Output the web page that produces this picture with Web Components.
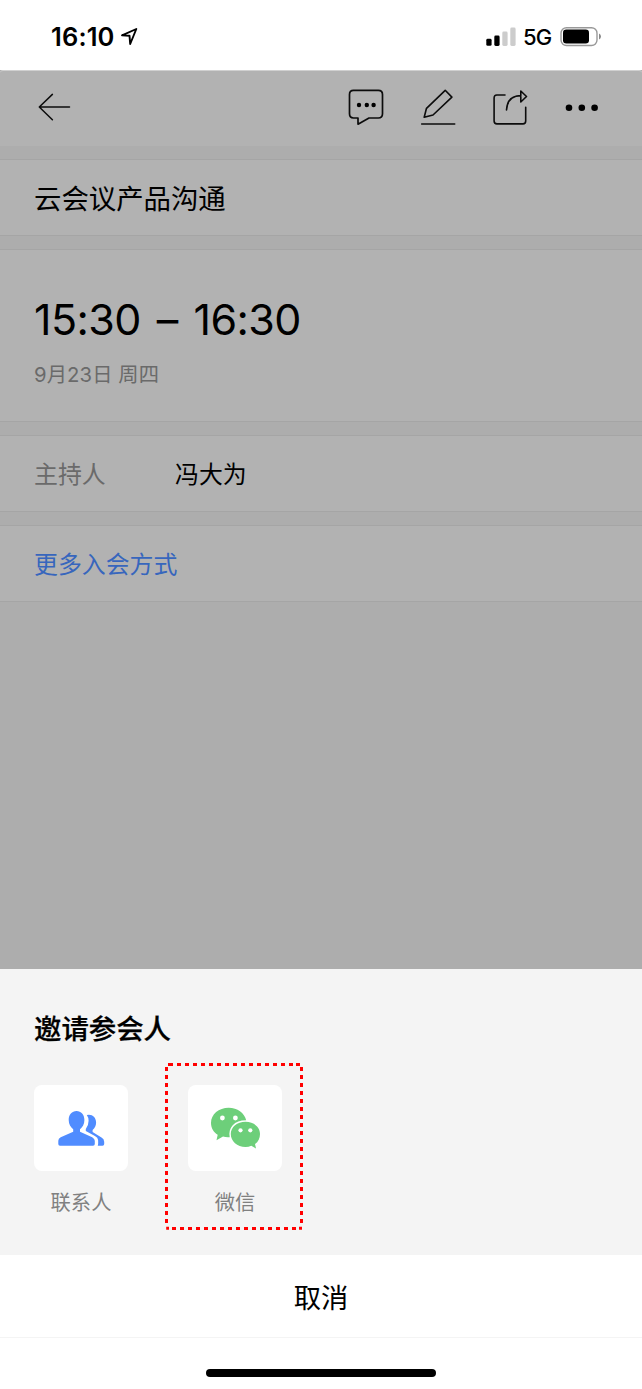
<!DOCTYPE html>
<html lang="zh-CN">
<head>
<meta charset="utf-8">
<title>邀请参会人</title>
<style>
html,body{margin:0;padding:0;background:#fff}
body{width:642px;height:1389px;overflow:hidden;font-family:Inter,"Noto Sans CJK SC",sans-serif;color:#000}
</style>
</head>
<body>
<meeting-screen></meeting-screen>
<script>
const define = (name, html) => {
  const t = document.createElement('template');
  t.innerHTML = html;
  customElements.define(name, class extends HTMLElement {
    constructor() {
      super();
      this.attachShadow({mode: 'open'}).append(t.content.cloneNode(true));
    }
  });
};

define('status-bar', `
<style>
:host{display:flex;height:70px;box-sizing:border-box;padding:3px 40px 0 51px;align-items:center;background:#fff}
.time{font-weight:600;font-size:25.5px;line-height:30px;letter-spacing:.15px;white-space:nowrap;width:69px}
.net{font-size:22px;line-height:30px;font-weight:450;margin-left:7px;width:29px;letter-spacing:-.8px;white-space:nowrap}
.signal{margin-left:auto}
.battery{margin-left:8px}
svg{display:block;flex:none}
</style>
<span class="time">16:10</span>
<svg width="19" height="20" viewBox="0 0 19 20"><path d="M2 8.3 16.3 2 10.2 17 9.5 8.7Z" fill="none" stroke="#000" stroke-width="1.9" stroke-linejoin="round"/></svg>
<svg class="signal" width="30" height="20" viewBox="0 0 30 20"><g><rect x=".3" y="11.8" width="5.3" height="7" rx="1.4"/><rect x="8.3" y="8.6" width="5.3" height="10.3" rx="1.4"/><rect x="16.3" y="4.6" width="5.3" height="14.3" rx="1.4" fill="#ccc"/><rect x="24.3" y=".6" width="5.3" height="18.3" rx="1.4" fill="#ccc"/></g></svg>
<span class="net">5G</span>
<svg class="battery" width="42" height="20" viewBox="0 0 42 20"><rect x="1" y=".7" width="36" height="17.8" rx="5.5" fill="none" stroke="#999" stroke-width="1.4"/><rect x="3" y="2.6" width="26" height="14" rx="3.3"/><path d="M39 6.4q2 1 2 3t-2 3z" fill="#888"/></svg>
`);

define('nav-bar', `
<style>
:host{display:flex;height:76px;box-sizing:border-box;padding:0 42px 3px 38px;border-top:1px solid #d0d0d0;background:#b2b2b2;border-radius:3px 3px 0 0;align-items:center}
svg{display:block;flex:none;fill:none;stroke:#0c0c0c;stroke-width:1.7;stroke-linecap:round;stroke-linejoin:round}
.chat{margin-left:auto}
.dots{fill:#000;stroke:none}
svg+svg:not(.chat){margin-left:36px}
</style>
<svg width="34" height="36" viewBox="0 0 34 36"><path d="M31.5 18H1.3M14.4 5.4 1.3 18 14.4 30.8" stroke-width="1.5"/></svg>
<svg class="chat" width="36" height="38" viewBox="0 0 36 38"><path d="M5.5 2.4H30.3Q34.5 2.4 34.5 6.6V25.8Q34.5 30 30.3 30H21L10 36.2V30H5.5Q1.5 30 1.5 25.8V6.6Q1.5 2.4 5.5 2.4Z"/><g class="dots"><circle cx="11" cy="17" r="2.2"/><circle cx="18.8" cy="17" r="2.2"/><circle cx="25.6" cy="17" r="2.2"/></g></svg>
<svg width="36" height="38" viewBox="0 0 36 38"><path d="M25.2 2.3 31.9 9.1 13 27 4.2 29.3 6.5 20.3ZM1.7 36H34.7" stroke-width="1.6"/></svg>
<svg width="36" height="38" viewBox="0 0 36 38"><path d="M13 7H4.8Q2.1 7 2.1 10V33Q2.1 35.9 5 35.9H31Q33.7 35.9 33.7 33V19.3M14.5 22C15 13 20 7.7 28.8 7.6V3L34.5 8.5 28.8 14V8.5" stroke-width="1.6"/></svg>
<svg width="36" height="38" viewBox="0 0 36 38"><g class="dots"><circle cx="5" cy="19.7" r="3.3"/><circle cx="17.8" cy="19.7" r="3.3"/><circle cx="30.6" cy="19.7" r="3.3"/></g></svg>
`);

define('info-cell', `
<style>
:host{display:flex;align-items:center;height:77px;box-sizing:border-box;margin-top:13px;padding:2px 34px 0;border:solid #a5a5a5;border-width:1px 0;background:#b2b2b2;white-space:nowrap}
</style><slot></slot>`);

define('meeting-time', `
<style>
:host{display:block;align-self:flex-start}
.range{font-size:43px;line-height:52px;letter-spacing:-.6px;word-spacing:4.5px;margin-top:41px}
.date{font-size:20.3px;line-height:30px;color:#6a6a6a;margin-top:15px;letter-spacing:.1px}
</style>
<div class="range"><slot name="range"></slot></div>
<div class="date"><slot name="date"></slot></div>`);

define('invite-option', `
<style>
:host{display:flex;flex-direction:column;align-items:center;width:94px}
.tile{width:94px;height:86px;border-radius:8px;background:#fff;display:flex;align-items:center;justify-content:center}
.label{font-size:20.3px;line-height:30px;color:#808080;margin-top:17px;white-space:nowrap}
</style>
<div class="tile"><slot name="icon"></slot></div>
<div class="label"><slot></slot></div>`);

define('contacts-icon', `
<style>:host{display:block}svg{display:block}</style>
<svg width="50" height="40" viewBox="0 -.7 50 40" fill="#508cff"><path d="M20.5 2.4C25.1 2.4 28.4 6.2 28.4 11.2C28.4 15.3 26.5 18.6 24 20.5V23L36.2 28.5Q38.8 30 38.8 32V35.3Q38.8 37.1 37 37.1H4Q2.3 37.1 2.3 35.3V32Q2.3 29.7 4.7 28.6L17.2 23V20.5C14.7 18.6 12.7 15.3 12.7 11.2C12.7 6.2 16 2.4 20.5 2.4Z"/><path d="M30.8 6.3Q33.2 5.5 35.8 6.5C38.5 7.7 40.1 10.5 40.1 13.8C40.1 17 38.8 19.6 36.6 21.2V23.3L45.5 28.9Q48.2 30.5 48.2 33V35.4Q48.2 37.1 46.5 37.1H41.7Q42.4 36 42.1 31.4Q42 29 38.9 27.3L29.8 22.2V20.3Q32.6 16.5 32.6 12Q32.6 8.8 30.8 6.3Z"/></svg>`);

define('wechat-icon', `
<style>:host{display:block}svg{display:block}</style>
<svg width="50" height="42" viewBox="-.5 .2 50 42"><path fill="#6dcf7a" d="M18.2 1C8.3 1 .5 7.5.5 16.2C.5 21.2 3 25.2 7.2 28L6 33.5 12.5 29.8Q15.4 30.8 19.2 30.5C17.5 21 23.5 13.5 35.7 13.5C33.8 6 27 1 18.2 1Z"/><path fill="#6dcf7a" d="M35 15C26.7 15 20.3 20.2 20.3 27.3C20.3 34.6 26.7 40.2 35 40.2Q38.3 40.2 40.8 39L45.5 41.8 44.5 37.2C47.8 35.2 49.5 31.7 49.5 27.3C49.5 20.2 43.3 15 35 15Z"/><g fill="#fff"><circle cx="11.9" cy="11.2" r="2.4"/><circle cx="24.9" cy="11.2" r="2.4"/><circle cx="30" cy="23.5" r="2.1"/><circle cx="39.8" cy="23.5" r="2.1"/></g></svg>`);

define('dotted-frame', `
<style>:host{display:block;position:absolute;left:-23px;top:-22px;width:138px;height:167px}svg{display:block}</style>
<svg width="138" height="167" fill="none" stroke="#f00" stroke-width="3"><path d="M12 1.5H132M7 165.5H132M1.5 12V162M136.5 12V162" stroke-dasharray="4 4"/><path d="M3 1.5H8M131 1.5H135M1.5 4V8M136.5 4V8M1.2 165.3H4M134 165.3H137" /></svg>`);

define('invite-sheet', `
<style>
:host{display:block;height:286px;background:#f4f4f4;box-sizing:border-box;padding:38px 34px 0}
h2{margin:0;font-size:27.4px;line-height:40px;font-weight:500;font-family:"Noto Sans CJK SC",sans-serif;-webkit-text-stroke:.25px #000}
.options{display:flex;gap:60px;margin-top:38px}
.marked{position:relative}
</style>
<h2>邀请参会人</h2>
<div class="options">
<invite-option><contacts-icon slot="icon"></contacts-icon>联系人</invite-option>
<div class="marked"><invite-option><wechat-icon slot="icon"></wechat-icon>微信</invite-option><dotted-frame></dotted-frame></div>
</div>`);

define('cancel-bar', `
<style>
:host{display:flex;height:134px;flex-direction:column;align-items:center;background:#fff}
.label{width:100%;height:83px;box-sizing:border-box;border-bottom:1px solid #f4f4f4;display:flex;align-items:center;justify-content:center;font-size:27.3px;line-height:40px;padding-top:5px}
.home{width:230px;height:8px;border-radius:4px;background:#000;margin-top:31px}
</style>
<div class="label"><slot></slot></div><div class="home"></div>`);

define('meeting-screen', `
<style>
:host{display:flex;flex-direction:column;width:642px;height:1389px}
.page{height:899px;background:#adadad}
.when{height:173px}
.title{font-size:27.4px;line-height:40px}
.row{font-size:23.9px;line-height:36px}
.key{width:141px;color:#6a6a6a}
.link{color:#3766bd}
</style>
<status-bar></status-bar>
<div class="page">
<nav-bar></nav-bar>
<info-cell><span class="title">云会议产品沟通</span></info-cell>
<info-cell class="when"><meeting-time><span slot="range">15:30 – 16:30</span><span slot="date">9月23日 周四</span></meeting-time></info-cell>
<info-cell class="row"><span class="key">主持人</span><span>冯大为</span></info-cell>
<info-cell class="row"><span class="link">更多入会方式</span></info-cell>
</div>
<invite-sheet></invite-sheet>
<cancel-bar>取消</cancel-bar>`);
</script>
</body>
</html>
